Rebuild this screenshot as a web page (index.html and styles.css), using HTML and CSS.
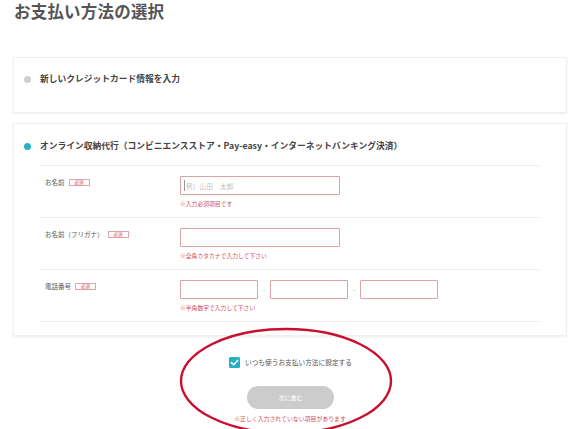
FILE: index.html
```html
<!DOCTYPE html>
<html lang="ja">
<head>
<meta charset="utf-8">
<title>お支払い方法の選択</title>
<link rel="stylesheet" href="styles.css">
</head>
<body>
<div class="page">
  <h1 class="title">お支払い方法の選択</h1>

  <div class="card card-simple">
    <div class="option">
      <span class="radio"></span>
      <span class="option-label">新しいクレジットカード情報を入力</span>
    </div>
  </div>

  <div class="card card-open">
    <div class="option option-open">
      <span class="radio radio-on"></span>
      <span class="option-label">オンライン収納代行（コンビニエンスストア・Pay-easy・インターネットバンキング決済）</span>
    </div>
    <div class="form">
      <div class="row">
        <div class="label">お名前<span class="badge">必須</span></div>
        <div class="field">
          <div class="input input-wide"><span class="caret"></span><span class="placeholder">例）山田　太郎</span></div>
          <div class="help">※入力必須項目です</div>
        </div>
      </div>
      <div class="row">
        <div class="label">お名前（フリガナ）<span class="badge">必須</span></div>
        <div class="field">
          <div class="input input-wide"></div>
          <div class="help">※全角カタカナで入力して下さい</div>
        </div>
      </div>
      <div class="row">
        <div class="label">電話番号<span class="badge">必須</span></div>
        <div class="field">
          <div class="tel">
            <div class="input input-tel"></div>
            <span class="dash">-</span>
            <div class="input input-tel"></div>
            <span class="dash">-</span>
            <div class="input input-tel"></div>
          </div>
          <div class="help">※半角数字で入力して下さい</div>
        </div>
      </div>
    </div>
  </div>

  <div class="footer">
    <div class="check-row">
      <span class="checkbox"><svg viewBox="0 0 11 11" width="11" height="11"><path d="M2.4 5.6 L4.6 7.7 L8.7 3.4" fill="none" stroke="#fff" stroke-width="1.5" stroke-linecap="round" stroke-linejoin="round"/></svg></span>
      <span class="check-label">いつも使うお支払い方法に設定する</span>
    </div>
    <div class="btn">次に進む</div>
    <div class="error">※正しく入力されていない項目があります</div>
  </div>

  <svg class="annot" width="230" height="120" viewBox="0 0 230 120">
    <ellipse cx="115" cy="54" rx="105" ry="52" fill="none" stroke="#c8102e" stroke-width="2.4"/>
  </svg>
</div>
</body>
</html>
```

FILE: styles.css
```css
* { box-sizing: border-box; }
html, body { margin: 0; padding: 0; background: #fff; }
body {
  font-family: "Noto Sans CJK JP", "Noto Sans", sans-serif;
  color: #444;
  width: 581px;
  height: 429px;
  overflow: hidden;
}
.page {
  position: relative;
  padding: 0 14px 0 13px;
}
.title {
  margin: 0;
  padding: 1px 0 0 1px;
  font-size: 16.5px;
  line-height: 20px;
  font-weight: 700;
  color: #555;
  letter-spacing: 0.2px;
}
.card {
  background: #fff;
  border: 1px solid #f0f0f0;
  box-shadow: 0 1px 2px rgba(0, 0, 0, 0.07);
}
.card-simple {
  margin-top: 36px;
  height: 56px;
}
.card-open {
  margin-top: 10px;
  height: 213px;
  padding: 0 26px 0 26px;
}
.option {
  display: flex;
  align-items: center;
  padding: 16px 0 0 10px;
  height: 10px;
  box-sizing: content-box;
}
.option-open {
  padding: 17px 0 14px 10px;
  margin-left: -26px;
}
.radio {
  width: 7px;
  height: 7px;
  border-radius: 50%;
  background: #cfcfcf;
  flex: none;
  margin-right: 9px;
}
.radio-on {
  background: #28b2bf;
}
.option-label {
  font-size: 8.75px;
  line-height: 10px;
  font-weight: 700;
  color: #444;
  white-space: nowrap;
}
.form {
  border-bottom: 1px solid #eee;
}
.row {
  display: flex;
  height: 52px;
  border-top: 1px solid #eee;
  padding: 10px 0 0 5px;
}
.label {
  width: 135px;
  flex: none;
  font-size: 6.5px;
  line-height: 8px;
  color: #555;
  padding-top: 2px;
  display: flex;
  align-items: flex-start;
  white-space: nowrap;
}
.badge {
  display: inline-flex;
  align-items: center;
  margin-left: 4px;
  border: 1px solid #e2a3a8;
  color: #d05060;
  font-size: 4.5px;
  line-height: 5px;
  padding: 0 5px;
  height: 7px;
  margin-top: 0.5px;
}
.field {
  display: flex;
  flex-direction: column;
}
.input {
  height: 19px;
  border: 1px solid #dca3a9;
  border-radius: 1px;
  background: #fff;
  display: flex;
  align-items: center;
  padding-left: 3px;
}
.input-wide { width: 160px; }
.input-tel { width: 78px; }
.caret {
  width: 1px;
  height: 11px;
  background: #999;
  margin-right: 1px;
}
.placeholder {
  font-size: 6.5px;
  color: #c9bcbd;
  letter-spacing: 0.3px;
}
.tel {
  display: flex;
  align-items: center;
}
.dash {
  width: 12px;
  text-align: center;
  font-size: 6px;
  color: #888;
}
.help {
  margin-top: 5px;
  font-size: 5.8px;
  line-height: 8px;
  color: #d0505c;
  white-space: nowrap;
}
.footer {
  display: flex;
  flex-direction: column;
  align-items: center;
  padding-top: 20px;
}
.check-row {
  display: flex;
  align-items: center;
  height: 12px;
  margin-left: 1px;
}
.checkbox {
  width: 11px;
  height: 11px;
  background: #26b1c1;
  border-radius: 1.5px;
  display: flex;
  margin-right: 5px;
}
.checkbox svg { display: block; }
.check-label {
  font-size: 6.7px;
  color: #555;
  line-height: 10px;
}
.btn {
  margin-top: 18px;
  width: 87px;
  height: 23px;
  border-radius: 12px;
  background: #cccccc;
  color: #fff;
  font-size: 6px;
  display: flex;
  align-items: center;
  justify-content: center;
  margin-left: 1px;
}
.error {
  margin-top: 5px;
  font-size: 5.9px;
  line-height: 10px;
  color: #d0505c;
  white-space: nowrap;
}
.annot {
  position: absolute;
  left: 171px;
  top: 327px;
  pointer-events: none;
}
```
